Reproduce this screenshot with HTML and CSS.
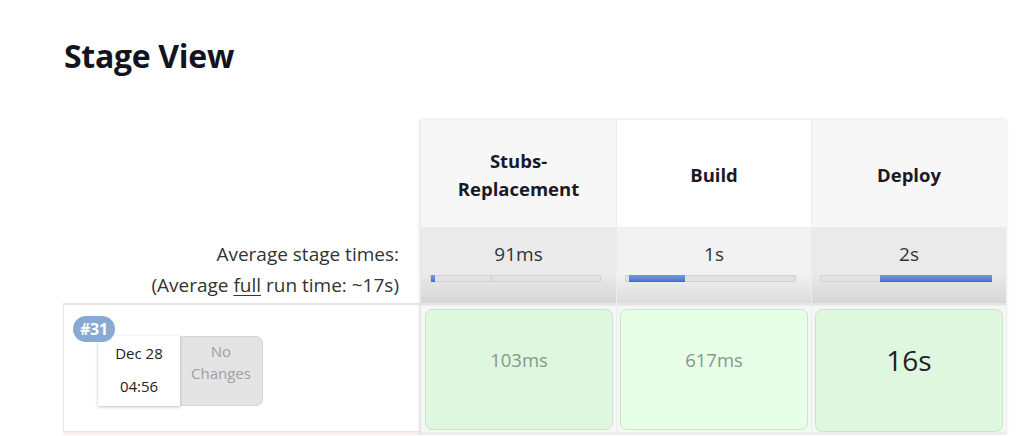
FILE: index.html
```html
<!DOCTYPE html>
<html>
<head>
<meta charset="utf-8">
<link rel="stylesheet" href="styles.css">
</head>
<body>
<div class="page">
  <h2 class="title">Stage View</h2>
  <div class="stage-view">
    <div class="left">
      <div class="left-head"></div>
      <div class="left-avg">
        <div>Average stage times:</div>
        <div>(Average <u>full</u> run time: ~17s)</div>
      </div>
      <div class="left-build">
        <span class="badge">#31</span>
        <div class="build-info">
          <div class="date">
            <div>Dec 28</div>
            <div>04:56</div>
          </div>
          <div class="changes">No<br>Changes</div>
        </div>
      </div>
      <div class="left-next"></div>
    </div>
    <div class="stages">
      <div class="col odd first">
        <div class="head">Stubs-<br>Replacement</div>
        <div class="avg">
          <div class="avg-time">91ms</div>
          <div class="bar"><span class="fill" style="left:0;width:4px"></span><span class="tick" style="left:60px"></span></div>
        </div>
        <div class="cell"><div class="box">103ms</div></div>
      </div>
      <div class="col even">
        <div class="head">Build</div>
        <div class="avg">
          <div class="avg-time">1s</div>
          <div class="bar"><span class="fill" style="left:3px;width:56px"></span></div>
        </div>
        <div class="cell"><div class="box light">617ms</div></div>
      </div>
      <div class="col odd">
        <div class="head">Deploy</div>
        <div class="avg">
          <div class="avg-time">2s</div>
          <div class="bar"><span class="fill" style="left:59px;width:112px"></span></div>
        </div>
        <div class="cell"><div class="box big">16s</div></div>
      </div>
    </div>
  </div>
</div>
</body>
</html>
```
FILE: styles.css
```css
html, body {
  margin: 0;
  padding: 0;
  background: #fff;
}
body {
  font-family: "Open Sans", "Noto Sans", sans-serif;
  color: #1f1f2b;
}
.page {
  padding: 32px 0 0 63px;
}
.title {
  margin: 0 0 0 1px;
  font-size: 32px;
  font-weight: 700;
  line-height: 48px;
  color: #14141f;
  letter-spacing: -0.3px;
}
.stage-view {
  display: flex;
  margin-top: 40px;
}
.left {
  width: 357px;
  display: flex;
  flex-direction: column;
}
.left-head {
  height: 108px;
}
.left-avg {
  height: 77px;
  box-sizing: border-box;
  padding: 11px 21px 0 0;
  text-align: right;
  font-size: 19px;
  line-height: 31px;
  color: #333;
  border-bottom: 2px solid #e6e6e6;
}
.left-avg u {
  text-decoration-thickness: 1px;
  text-underline-offset: 3px;
}
.left-build {
  position: relative;
  height: 126px;
  box-sizing: border-box;
  border-left: 1px solid #e8e8e8;
  border-right: 1px solid #e8e8e8;
  padding: 31px 0 0 34px;
}
.left-next {
  height: 3px;
  background: #fbeeee;
  border-top: 1px solid #f2dede;
}
.badge {
  position: absolute;
  left: 9px;
  top: 11px;
  z-index: 2;
  background: #88a9d0;
  color: #fff;
  font-weight: 700;
  font-size: 16px;
  line-height: 26px;
  height: 26px;
  padding: 0 7px;
  border-radius: 13px;
  letter-spacing: -0.3px;
}
.build-info {
  display: flex;
}
.date {
  width: 82px;
  height: 70px;
  background: #fff;
  box-shadow: 0 1px 3px rgba(0,0,0,0.25);
  font-size: 15px;
  line-height: 33px;
  text-align: center;
  color: #222;
  position: relative;
  z-index: 1;
}
.date div:first-child {
  margin-top: 1px;
}
.changes {
  width: 83px;
  height: 70px;
  box-sizing: border-box;
  background: #e4e4e4;
  border: 1px solid #d6d6d6;
  border-left: none;
  border-radius: 0 7px 7px 0;
  color: #a0a0a0;
  font-size: 15px;
  line-height: 22px;
  text-align: center;
  padding-top: 3px;
}
.stages {
  display: flex;
  gap: 1px;
  background: #ededed;
  border-left: 1px solid #e6e6e6;
  box-shadow: 0 0 4px rgba(0,0,0,0.13);
}
.col {
  width: 194px;
  display: flex;
  flex-direction: column;
  gap: 1px;
}
.col.first {
  width: 195px;
}
.head {
  height: 107px;
  box-sizing: border-box;
  padding-top: 2px;
  display: flex;
  align-items: center;
  justify-content: center;
  text-align: center;
  font-weight: 700;
  font-size: 18.5px;
  line-height: 28px;
  color: #1a1a26;
  background: #f7f7f7;
}
.even .head {
  background: #fff;
}
.avg {
  height: 77px;
  box-sizing: border-box;
  padding-top: 11px;
  background: linear-gradient(#eaeaea 0, #eaeaea 60%, #d6d6d6 100%);
  border-bottom: 2px solid #e4e4e4;
}
.even .avg {
  background: linear-gradient(#f2f2f2 0, #f2f2f2 60%, #dcdcdc 100%);
}
.avg-time {
  text-align: center;
  font-size: 19px;
  line-height: 30px;
  color: #333;
}
.bar {
  position: relative;
  margin: 6px 0 0 8px;
  width: 171px;
  height: 7px;
  box-sizing: border-box;
  background: #e2e2e2;
  border: 1px solid #d2d2d2;
  border-radius: 1px;
}
.first .bar {
  margin-left: 9px;
}
.fill {
  position: absolute;
  top: -1px;
  height: 7px;
  background: linear-gradient(#6f9ae0, #4a7bcf);
  border-bottom: 1px solid #3f6fc0;
  box-sizing: border-box;
}
.tick {
  position: absolute;
  top: 0;
  width: 1px;
  height: 5px;
  background: #c8c8c8;
}
.cell {
  height: 126px;
  box-sizing: border-box;
  padding: 3px 3px 2px 3px;
  background: #f4f8f4;
}
.first .cell {
  padding-left: 4px;
}
.box {
  height: 100%;
  box-sizing: border-box;
  background: #def7de;
  border: 1px solid #cfe1cf;
  border-radius: 7px;
  display: flex;
  align-items: center;
  justify-content: center;
  font-size: 18.5px;
  color: #8a968a;
  padding-bottom: 20px;
}
.box.light {
  background: #e7fee7;
}
.box.big {
  font-size: 28px;
  color: #1f1f26;
  height: calc(100% + 2px);
  padding-bottom: 22px;
}
```
